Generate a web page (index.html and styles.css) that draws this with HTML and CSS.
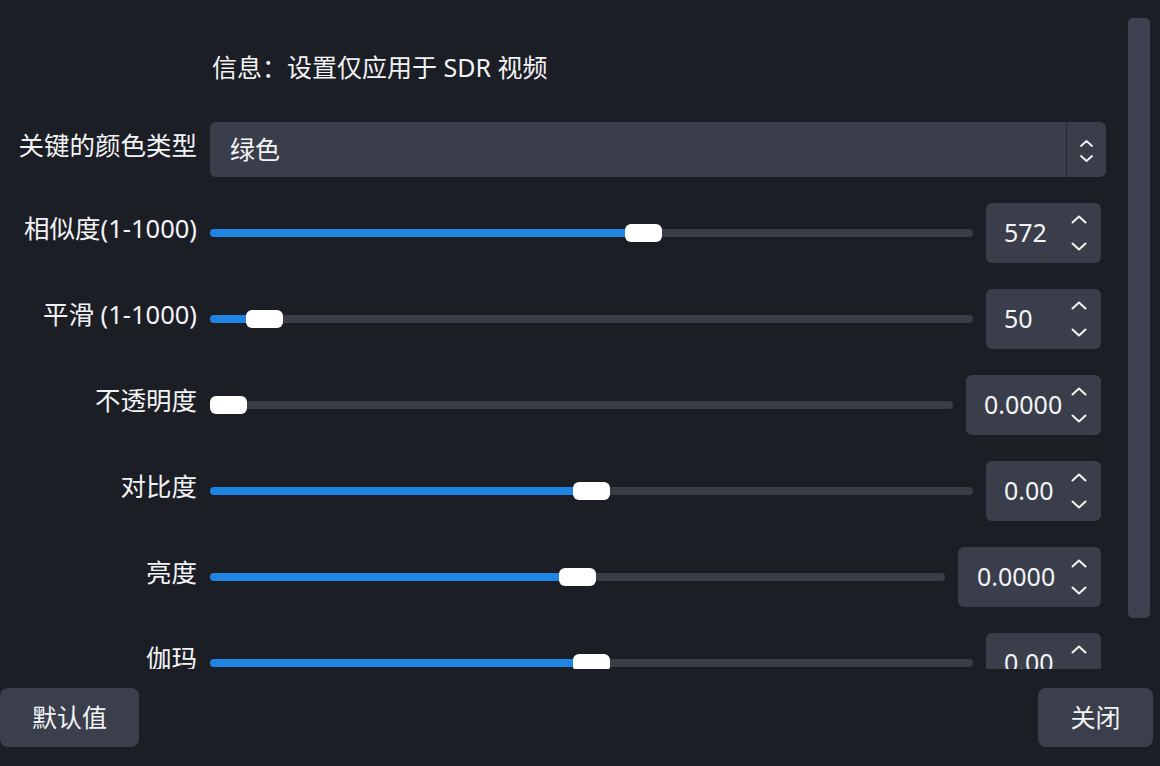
FILE: index.html
```html
<!DOCTYPE html>
<html lang="zh-CN">
<head>
<meta charset="utf-8"/>
    <title>色度键</title>
    <link rel="stylesheet" href="styles.css">
</head>
<body>
    <div class="dialog">
        <div class="view">
            <div class="form">
                <div class="info">信息：设置仅应用于 SDR 视频</div>

                <label class="lbl">关键的颜色类型</label>
                <div class="combo">
                    <span class="combo-text">绿色</span>
                    <span class="combo-btn">
                        <svg width="13" height="7" viewBox="0 0 13 7"><polyline points="1,6 6.5,1 12,6"/></svg>
                        <svg width="13" height="7" viewBox="0 0 13 7"><polyline points="1,1 6.5,6 12,1"/></svg>
                    </span>
                </div>

                <label class="lbl">相似度(1-1000)</label>
                <div class="field">
                    <div class="slider" style="--p:0.5716"><div class="fill"></div><div class="knob"></div></div>
                    <div class="spin w115"><span class="val">572</span><span class="arrows"><svg viewBox="0 0 16 9"><polyline points="1.5,7.5 8,1.5 14.5,7.5"/></svg><svg viewBox="0 0 16 9"><polyline points="1.5,1.5 8,7.5 14.5,1.5"/></svg></span></div>
                </div>

                <label class="lbl">平滑 (1-1000)</label>
                <div class="field">
                    <div class="slider" style="--p:0.049"><div class="fill"></div><div class="knob"></div></div>
                    <div class="spin w115"><span class="val">50</span><span class="arrows"><svg viewBox="0 0 16 9"><polyline points="1.5,7.5 8,1.5 14.5,7.5"/></svg><svg viewBox="0 0 16 9"><polyline points="1.5,1.5 8,7.5 14.5,1.5"/></svg></span></div>
                </div>

                <label class="lbl">不透明度</label>
                <div class="field">
                    <div class="slider" style="--p:0"><div class="fill"></div><div class="knob"></div></div>
                    <div class="spin w135"><span class="val">0.0000</span><span class="arrows"><svg viewBox="0 0 16 9"><polyline points="1.5,7.5 8,1.5 14.5,7.5"/></svg><svg viewBox="0 0 16 9"><polyline points="1.5,1.5 8,7.5 14.5,1.5"/></svg></span></div>
                </div>

                <label class="lbl">对比度</label>
                <div class="field">
                    <div class="slider" style="--p:0.5"><div class="fill"></div><div class="knob"></div></div>
                    <div class="spin w115"><span class="val">0.00</span><span class="arrows"><svg viewBox="0 0 16 9"><polyline points="1.5,7.5 8,1.5 14.5,7.5"/></svg><svg viewBox="0 0 16 9"><polyline points="1.5,1.5 8,7.5 14.5,1.5"/></svg></span></div>
                </div>

                <label class="lbl">亮度</label>
                <div class="field">
                    <div class="slider" style="--p:0.5"><div class="fill"></div><div class="knob"></div></div>
                    <div class="spin w143"><span class="val">0.0000</span><span class="arrows"><svg viewBox="0 0 16 9"><polyline points="1.5,7.5 8,1.5 14.5,7.5"/></svg><svg viewBox="0 0 16 9"><polyline points="1.5,1.5 8,7.5 14.5,1.5"/></svg></span></div>
                </div>

                <label class="lbl">伽玛</label>
                <div class="field">
                    <div class="slider" style="--p:0.5"><div class="fill"></div><div class="knob"></div></div>
                    <div class="spin w115"><span class="val">0.00</span><span class="arrows"><svg viewBox="0 0 16 9"><polyline points="1.5,7.5 8,1.5 14.5,7.5"/></svg><svg viewBox="0 0 16 9"><polyline points="1.5,1.5 8,7.5 14.5,1.5"/></svg></span></div>
                </div>
            </div>
            <div class="vscroll"><div class="handle"></div></div>
        </div>
        <div class="buttons">
            <button class="btn btn-default">默认值</button>
            <button class="btn btn-close">关闭</button>
        </div>
    </div>
</body>
</html>
```

FILE: styles.css
```css
html, body { margin: 0; padding: 0; }
body {
    background: #1c1e26;
    color: #f2f3f5;
    font-family: "Noto Sans", "Noto Sans CJK SC", sans-serif;
    font-size: 25px;
}
.dialog { width: 1160px; height: 766px; }

.view { height: 669px; overflow: hidden; display: flex; }
.form {
    width: 1106px;
    display: grid;
    grid-template-columns: 197px 1fr;
    column-gap: 13px;
    row-gap: 26px;
    padding-top: 41px;
    align-content: start;
}
.info { grid-column: 2; height: 55px; display: flex; align-items: center; padding: 0 0 6px 2px; box-sizing: border-box; }
.lbl { text-align: right; align-self: center; white-space: nowrap; line-height: 1; padding-bottom: 8px; font-size: 25.5px; }

/* combo box */
.combo { height: 55px; display: flex; background: #3a3e4a; border-radius: 6px; }
.combo-text { flex: 1; display: flex; align-items: center; padding: 0 0 4px 20px; }
.combo-btn {
    width: 39px; border-left: 1px solid #262932;
    display: flex; flex-direction: column; align-items: center; justify-content: center; gap: 8px;
    padding-top: 2px;
}
.combo-btn svg { display: block; fill: none; stroke: #f2f3f5; stroke-width: 1.8; stroke-linecap: round; stroke-linejoin: round; }

/* slider + spin rows */
.field { display: flex; align-items: center; gap: 13px; height: 60px; margin-right: 5px; }
.slider { flex: 1; height: 8px; border-radius: 4px; background: #3a3d48; position: relative; }
.slider .fill {
    height: 100%; border-radius: 4px; background: #1d84e4;
    width: calc(var(--p) * (100% - 37px) + 18px);
}
.slider .knob {
    position: absolute; top: -5px;
    left: calc(var(--p) * (100% - 37px));
    width: 37px; height: 18px; border-radius: 6px; background: #fff;
}

.spin {
    height: 60px; box-sizing: border-box; border-radius: 6px; background: #3a3e4a;
    display: flex; align-items: center; padding: 0 14px 0 18px;
}
.w115 { width: 115px; }
.w135 { width: 135px; }
.w143 { width: 143px; padding-left: 19px; }
.spin .val { flex: 1; line-height: 1; padding-bottom: 2px; }
.arrows { width: 16px; display: flex; flex-direction: column; gap: 18px; }
.arrows svg { display: block; width: 16px; height: 9px; fill: none; stroke: #f2f3f5; stroke-width: 2; stroke-linecap: round; stroke-linejoin: round; }

/* scrollbar */
.vscroll { width: 22px; margin-left: 22px; padding-top: 18px; }
.vscroll .handle { height: 600px; background: #3d4250; border-radius: 5px; }

/* bottom buttons */
.buttons { display: flex; justify-content: space-between; margin-top: 19px; padding-right: 7px; }
.btn {
    height: 59px; border: 0; border-radius: 8px; background: #3b3f4b; color: #f2f3f5;
    font-family: "Noto Sans", "Noto Sans CJK SC", sans-serif; font-size: 25px; padding: 0 0 4px;
}
.btn-default { width: 139px; }
.btn-close { width: 115px; }
```
